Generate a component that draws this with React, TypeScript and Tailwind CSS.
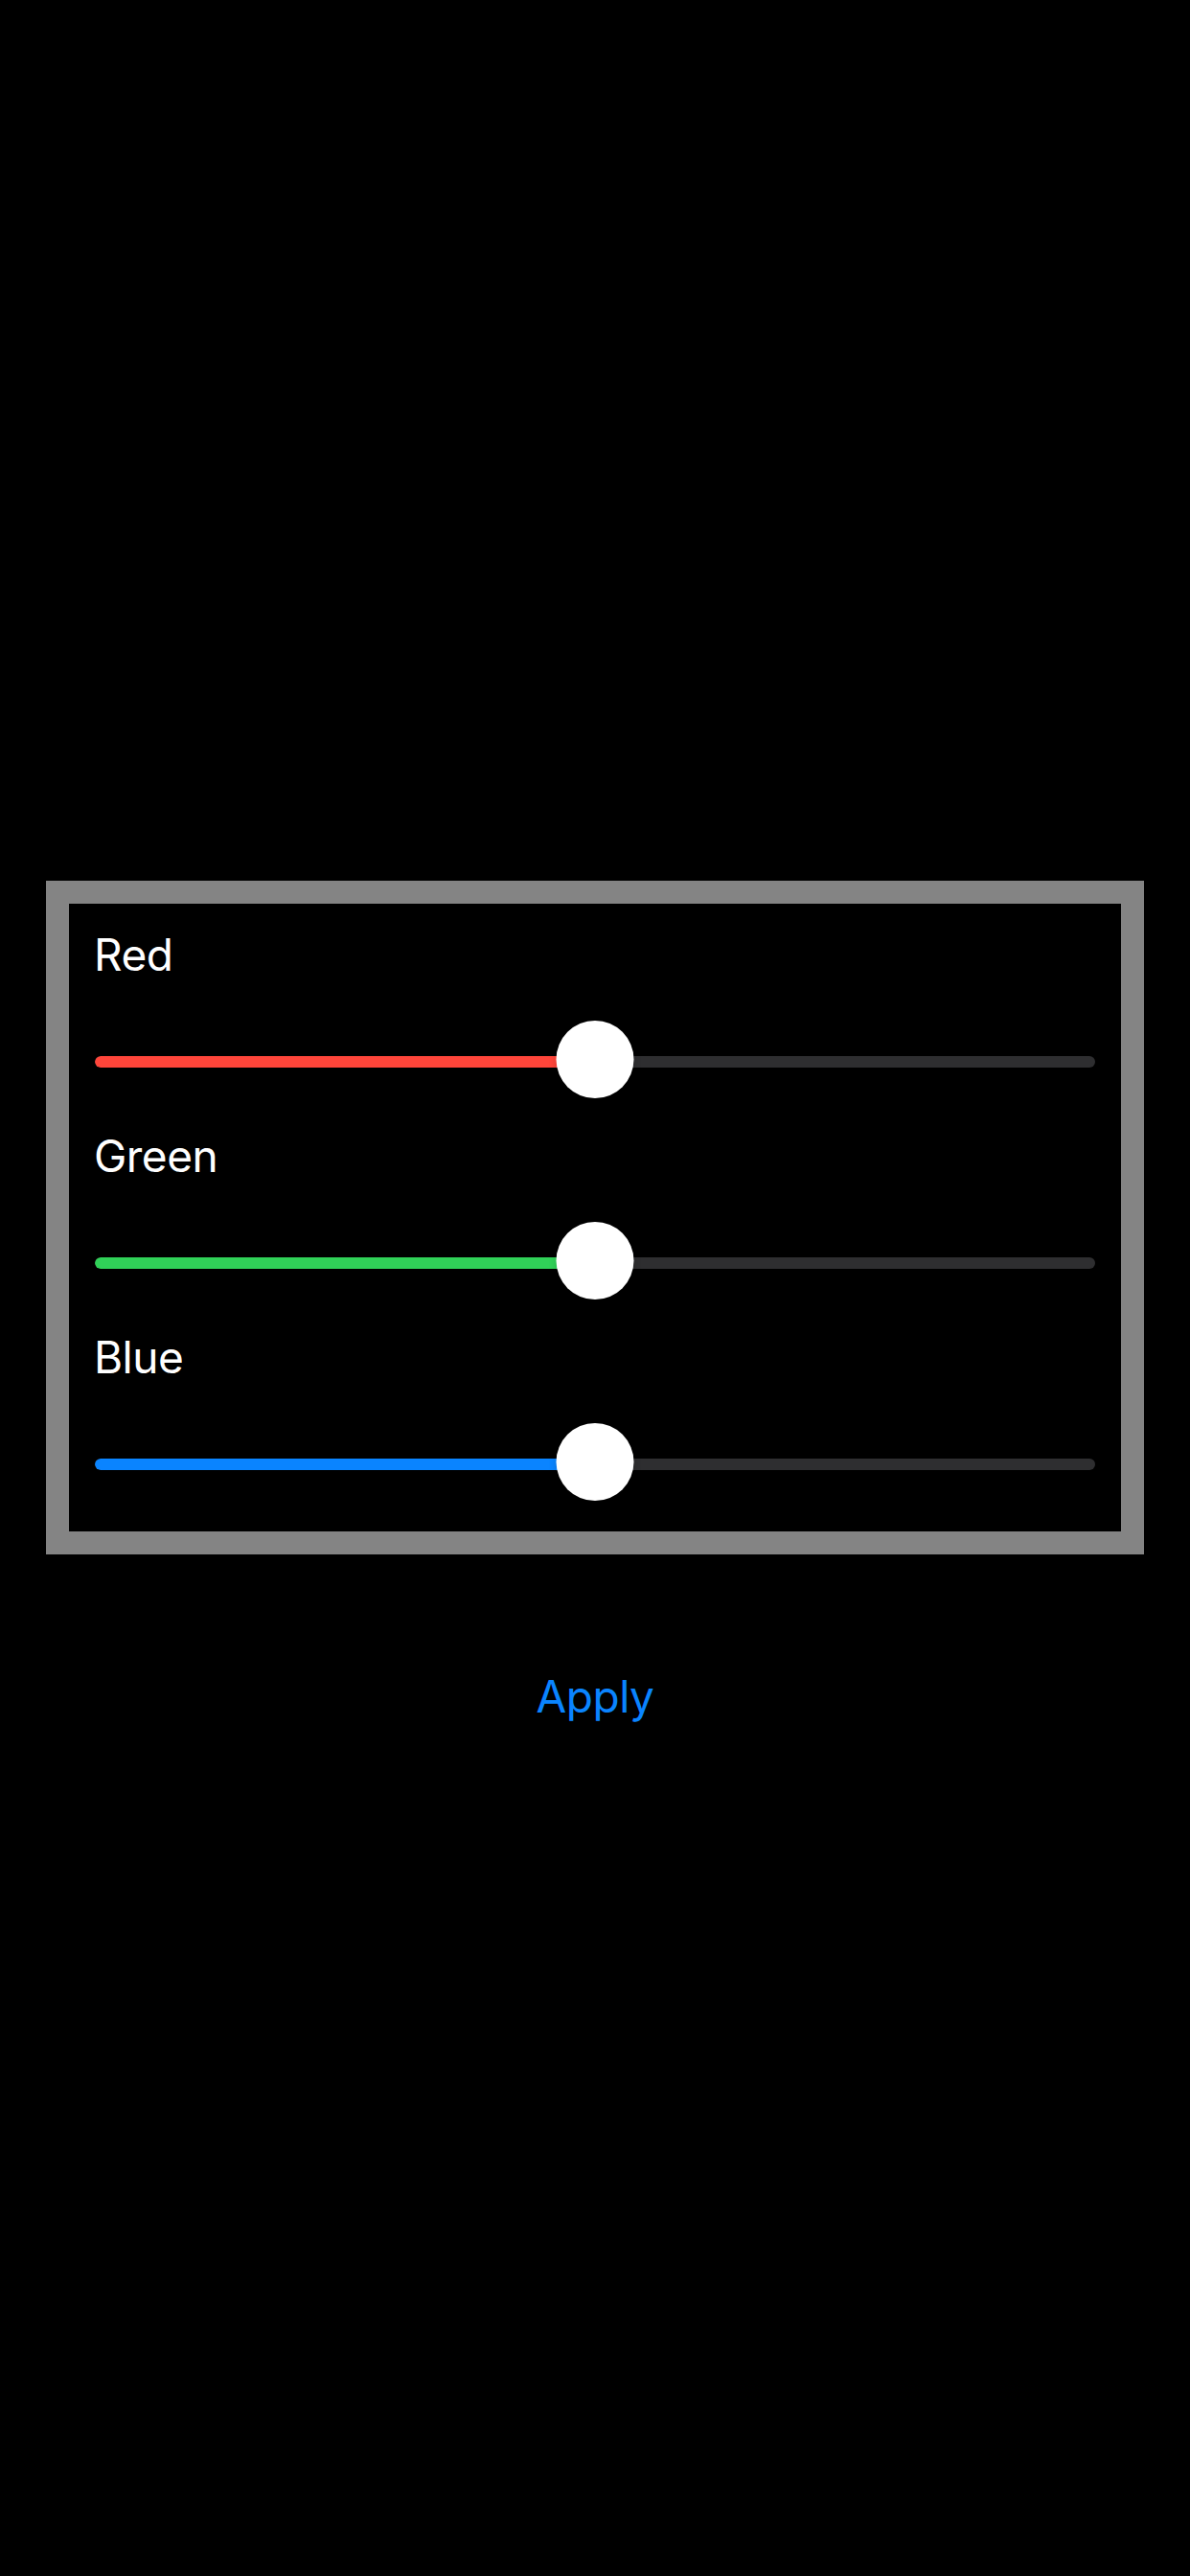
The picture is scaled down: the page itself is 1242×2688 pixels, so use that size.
import { useState } from "react";

type Channel = {
  label: string;
  color: string;
};

const channels: Channel[] = [
  { label: "Red", color: "bg-[#ff453a]" },
  { label: "Green", color: "bg-[#30d158]" },
  { label: "Blue", color: "bg-[#0a84ff]" },
];

function ColorSlider({ label, color, value }: Channel & { value: number }) {
  return (
    <div className="flex flex-col">
      <div className="-ml-[1px] h-[58px] text-[46px] leading-[58px] tracking-[-0.5px] text-white">{label}</div>
      <div className="relative mt-[40px] h-[81px] flex items-center">
        <div className="mt-[5px] w-full h-[12px] rounded-full bg-[#2e2e30] overflow-hidden">
          <div className={`h-full rounded-full ${color}`} style={{ width: `${value * 100}%` }} />
        </div>
        {/* thumb */}
        <div
          className="absolute top-0 w-[81px] h-[81px] -translate-x-1/2 rounded-full bg-white shadow-[0_3px_8px_rgba(0,0,0,0.15)]"
          style={{ left: `${value * 100}%` }}
        />
      </div>
    </div>
  );
}

export default function App() {
  const [values] = useState([0.5, 0.5, 0.5]);

  return (
    <div
      className="min-h-[2688px] w-full bg-black px-[48px] pt-[919px]"
      style={{ fontFamily: "Inter, 'Liberation Sans', sans-serif" }}
    >
      <div className="border-[24px] border-[#848484] bg-black">
        <div className="flex flex-col gap-[31px] px-[27px] pt-6 pb-8">
          {channels.map((c, i) => (
            <ColorSlider key={c.label} {...c} value={values[i]} />
          ))}
        </div>
      </div>

      <div className="mt-[119px] flex justify-center">
        <button className="h-[58px] text-[46px] leading-[58px] tracking-[-0.5px] text-[#0a84ff]">Apply</button>
      </div>
    </div>
  );
}
